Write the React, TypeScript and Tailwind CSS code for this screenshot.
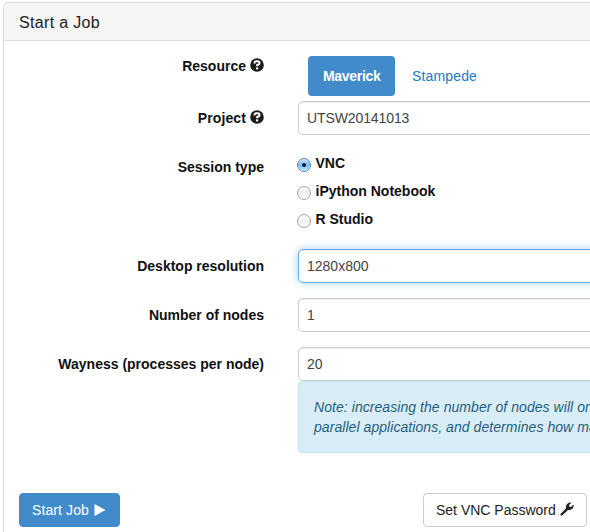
import type { ReactNode } from "react";

function HelpIcon() {
  return (
    <svg viewBox="0 0 14 14" className="-mt-[2px] h-[14px] w-[14px] shrink-0">
      <circle cx="7" cy="7" r="6.8" fill="#1c1c1c" />
      <path d="M4.5 5.6V4.9Q4.5 3.3 6.2 3.3H7.8Q9.5 3.3 9.5 4.9Q9.5 6 8.4 6.5L7.1 7.2V8.3" fill="none" stroke="#fff" strokeWidth="2" />
      <rect x="6" y="9.4" width="2.2" height="2" fill="#fff" />
    </svg>
  );
}

function WrenchIcon() {
  return (
    <svg viewBox="0 0 14 14" className="-mt-[3px] h-[14px] w-[14px] shrink-0" fill="#222">
      <path d="M.5 12.1 5.9 6.6C5.6 4.9 6.2 3 7.4 1.8 8.6.6 10.2.2 11.6.6L9.1 3.1 9.4 4.8 11 5.1 13.5 2.6C13.9 4.1 13.4 5.7 12.2 6.8 11 7.9 9.5 8.3 8 8.1L2.2 13.5Q1.5 14 .9 13.3L.5 12.9Q.2 12.5.5 12.1Z" />
    </svg>
  );
}

interface RowProps {
  label: string;
  height: string;
  labelPad?: string;
  help?: boolean;
  spacing?: string;
  children: ReactNode;
}

function Row({ label, height, labelPad = "pt-[7px]", help, spacing = "", children }: RowProps) {
  return (
    <div className={`flex items-start ${height}`}>
      <div className={`flex w-[260px] shrink-0 items-center justify-end gap-1 font-bold text-[#111] ${labelPad}`}>
        <span className={`whitespace-nowrap ${spacing}`}>{label}</span>
        {help && <HelpIcon />}
      </div>
      <div className="ml-[34px] w-[600px] shrink-0">{children}</div>
    </div>
  );
}

function Field({ value, focused = false, spacing = "" }: { value: string; focused?: boolean; spacing?: string }) {
  return (
    <input
      readOnly
      defaultValue={value}
      className={`block h-[34px] w-full rounded-[5px] border bg-white px-2 text-[14px] text-[#444] outline-none ${spacing} ${
        focused
          ? "border-[#66afe9] shadow-[inset_0_1px_1px_rgba(0,0,0,0.075),0_0_8px_rgba(102,175,233,0.6)]"
          : "border-[#ccc] shadow-[inset_0_1px_1px_rgba(0,0,0,0.075)]"
      }`}
    />
  );
}

function Choice({ label, checked = false }: { label: string; checked?: boolean }) {
  return (
    <div className="-ml-px flex h-7 items-start">
      <span
        className={`mt-[8px] flex h-[14px] w-[14px] items-center justify-center rounded-full border ${
          checked
            ? "border-[#6689b5] bg-linear-to-b from-[#d5e9fa] via-[#79b8ed] to-[#c4eeff]"
            : "border-[#a5a5a5] bg-linear-to-b from-white via-[#eeeeee] to-white"
        }`}
      >
        {checked && <span className="h-1 w-1 rounded-full bg-[#061b38]" />}
      </span>
      <span className="ml-[4.5px] mt-[3px] font-bold text-[#111]">{label}</span>
    </div>
  );
}

export default function App() {
  return (
    <div className="h-[532px] w-[590px] overflow-hidden bg-white pl-[3px] pt-[2px] font-['Liberation_Sans',Arial,sans-serif] text-[14px] leading-5">
      <div className="h-[560px] w-[900px] rounded-tl border border-[#ddd]">
        <div className="h-[38px] rounded-tl-[3px] border-b border-[#ddd] bg-[#f5f5f5] pl-[15px] pt-[10px] text-[16px] leading-[19px] tracking-[0.33px] text-[#222]">
          Start a Job
        </div>
        <div className="pt-[15px]">
          <Row label="Resource" height="h-[45px]" labelPad="pt-0" help>
            <div className="flex gap-[2px] pl-[10px]">
              <span className="w-[87px] rounded bg-[#428bca] px-[15px] py-[10px] font-bold tracking-[-0.3px] text-white">Maverick</span>
              <span className="px-[15px] py-[10px] tracking-[0.15px] text-[#1a7dc4]">Stampede</span>
            </div>
          </Row>
          <Row label="Project" height="h-[49px]" help spacing="tracking-[0.1px]">
            <Field value="UTSW20141013" spacing="tracking-[-0.1px]" />
          </Row>
          <Row label="Session type" height="h-[99px]">
            <Choice label="VNC" checked />
            <Choice label="iPython Notebook" />
            <Choice label="R Studio" />
          </Row>
          <Row label="Desktop resolution" height="h-[49px]">
            <Field value="1280x800" focused />
          </Row>
          <Row label="Number of nodes" height="h-[49px]">
            <Field value="1" />
          </Row>
          <Row label="Wayness (processes per node)" height="h-[146px]">
            <Field value="20" />
            <div className="h-[72px] whitespace-nowrap rounded border border-[#bce8f1] bg-[#d9edf7] px-[15px] pt-[15px] italic text-[#1f5f80]">
              <span className="tracking-[0.06px]">Note: increasing the number of nodes will only</span>
              <br />
              <span className="tracking-[0.06px]">parallel applications, and determines how many</span>
            </div>
          </Row>
          <div className="flex items-start gap-[303px] pl-[15px]">
            <button className="flex h-[34px] w-[101px] items-center gap-[5px] rounded border border-[#428bca] bg-[#428bca] pl-3 text-white">
              <span className="whitespace-nowrap tracking-[0.1px]">Start Job</span>
              <svg viewBox="0 0 12 12" className="h-3 w-3" fill="#fff">
                <path d="M.5 0 11.5 6 .5 12Z" />
              </svg>
            </button>
            <button className="flex h-[34px] w-[164px] items-center gap-1 rounded border border-[#ccc] bg-white pl-3 text-[#222]">
              <span className="whitespace-nowrap">Set VNC Password</span>
              <WrenchIcon />
            </button>
          </div>
        </div>
      </div>
    </div>
  );
}
